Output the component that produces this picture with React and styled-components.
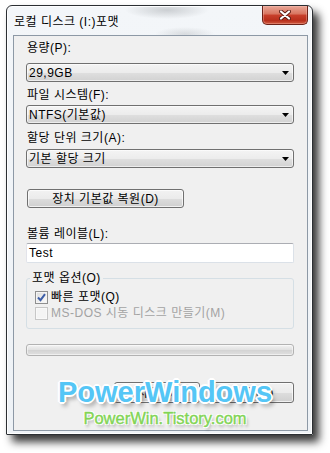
import styled, { createGlobalStyle } from "styled-components";

const GlobalStyle = createGlobalStyle`
  html, body {
    margin: 0;
    padding: 0;
    background: #fff;
  }
  body {
    font-family: "Liberation Sans", "Noto Sans CJK KR", sans-serif;
  }
`;

const uiFont = `"Liberation Sans", "Noto Sans CJK KR", sans-serif`;

const Page = styled.div`
  position: relative;
  width: 330px;
  height: 453px;
  padding: 5px 0 0 6px;
  box-sizing: border-box;
  overflow: hidden;
  background: #fff;
`;

const Window = styled.div`
  box-sizing: border-box;
  width: 307px;
  height: 430px;
  border: 1px solid #2b2f33;
  border-radius: 6px 6px 1px 1px;
  background:
    radial-gradient(ellipse 42px 9px at 160px 4px, rgba(110, 115, 120, 0.3), transparent),
    radial-gradient(ellipse 30px 7px at 178px 28px, rgba(120, 125, 130, 0.22), transparent),
    linear-gradient(#f3f6f9, #eef2f6);
  box-shadow: 6px 7px 8px rgba(0, 0, 0, 0.78), inset 0 0 0 1px rgba(255, 255, 255, 0.9);
  padding: 0 4px 3px 6px;
  display: flex;
  flex-direction: column;
`;

const TitleBar = styled.div`
  height: 29px;
  display: flex;
  align-items: flex-start;
  justify-content: space-between;
`;

const Title = styled.div`
  margin: 9px 0 0 1px;
  font: 12px/14px ${uiFont};
  letter-spacing: 0.5px;
  color: #000;
`;

const CloseButton = styled.div`
  box-sizing: border-box;
  width: 46px;
  height: 19px;
  border: 1px solid #6c2218;
  border-top: none;
  border-radius: 0 0 5px 5px;
  background: linear-gradient(#e9a797 0%, #d8745f 45%, #c8402c 50%, #b82f1c 80%, #cf5a3f 100%);
  box-shadow: inset 0 0 0 1px rgba(255, 200, 190, 0.35);
  display: flex;
  align-items: center;
  justify-content: center;
`;

const Client = styled.div`
  flex: 1;
  border: 1px solid #8d99a6;
  background: #f0f0f0;
  padding: 0 13px 0 12px;
  display: flex;
  flex-direction: column;
`;

const Label = styled.div`
  margin-top: ${p => p.$top}px;
  padding-left: 1px;
  font: 12px/14px ${uiFont};
  letter-spacing: 0.5px;
  color: #000;
  white-space: nowrap;
`;

const Combo = styled.div`
  box-sizing: border-box;
  height: 19px;
  margin-top: ${p => p.$top}px;
  border: 1px solid #707070;
  border-radius: 3px;
  background: linear-gradient(#f4f4f4 0%, #ececec 50%, #dfdfdf 51%, #d2d2d2 100%);
  box-shadow: inset 0 0 0 1px rgba(255, 255, 255, 0.6);
  display: flex;
  align-items: center;
  justify-content: space-between;
  padding: 0 4px 0 2px;
  font: 12px/14px ${uiFont};
  letter-spacing: 0.5px;
  color: #000;
`;

const Button = styled.div`
  box-sizing: border-box;
  width: ${p => p.$w}px;
  height: ${p => p.$h}px;
  margin-top: ${p => p.$top || 0}px;
  margin-left: ${p => p.$left || 0}px;
  border: 1px solid #707070;
  border-radius: 3px;
  background: linear-gradient(#f2f2f2 0%, #ebebeb 50%, #dddddd 51%, #cfcfcf 100%);
  box-shadow: inset 0 0 0 1px rgba(255, 255, 255, 0.7);
  display: flex;
  align-items: center;
  justify-content: center;
  font: 12px/14px ${uiFont};
  letter-spacing: 0.5px;
  color: #000;
  white-space: nowrap;
`;

const TextBox = styled.div`
  box-sizing: border-box;
  height: 20px;
  margin-top: 2px;
  background: #fff;
  border: 1px solid #dbe1e8;
  border-top-color: #abadb3;
  border-left-color: #e2e3ea;
  border-radius: 2px;
  display: flex;
  align-items: center;
  padding-left: 2px;
  font: 12px/14px ${uiFont};
  letter-spacing: 0.5px;
  color: #000;
`;

const Group = styled.fieldset`
  margin: 8px 0 0 0;
  padding: 0;
  min-width: 0;
  border: 1px solid #d5dfe5;
  border-radius: 3px;
`;

const Legend = styled.legend`
  margin-left: 3px;
  padding: 0 2px;
  font: 12px/14px ${uiFont};
  letter-spacing: 0.5px;
  color: #000;
`;

const OptionList = styled.div`
  padding: 4px 0 7px 8px;
  display: flex;
  flex-direction: column;
`;

const OptionRow = styled.div`
  height: 16px;
  display: flex;
  align-items: center;
  gap: 3px;
  font: 12px/14px ${uiFont};
  letter-spacing: 0.5px;
  color: ${p => (p.$disabled ? "#a3a3a3" : "#000")};
  white-space: nowrap;
`;

const Box = styled.span`
  box-sizing: border-box;
  width: 13px;
  height: 13px;
  border: 1px solid ${p => (p.$disabled ? "#c7c7c7" : "#8f8f8f")};
  background: ${p =>
    p.$disabled
      ? "#f4f4f4"
      : "linear-gradient(135deg, #dcdcdc, #fdfdfd)"};
  box-shadow: inset 0 0 0 1px ${p => (p.$disabled ? "#f9f9f9" : "#f4f4f4")};
  display: flex;
  align-items: center;
  justify-content: center;
`;

const Progress = styled.div`
  box-sizing: border-box;
  height: 12px;
  margin-top: 15px;
  border: 1px solid #b2b2b2;
  border-radius: 3px;
  background: linear-gradient(#f3f3f3 0%, #e2e2e2 45%, #d4d4d4 55%, #e0e0e0 100%);
  box-shadow: inset 0 0 0 1px rgba(255, 255, 255, 0.5);
`;

const Actions = styled.div`
  margin-top: 26px;
  display: flex;
  justify-content: flex-end;
  gap: 13px;
`;

const Watermark = styled.div`
  position: absolute;
  top: 378px;
  left: 0;
  right: 0;
  display: flex;
  flex-direction: column;
  align-items: center;
  pointer-events: none;
`;

const BrandBig = styled.div`
  font: bold 29px/29px "Liberation Sans", Arial, sans-serif;
  color: #55c6f6;
  text-shadow:
    -1px -1px 0 #fff, 1px -1px 0 #fff, -1px 1px 0 #fff, 1px 1px 0 #fff,
    0 -2px 0 #fff, 0 2px 0 #fff, -2px 0 0 #fff, 2px 0 0 #fff,
    3px 4px 4px rgba(0, 0, 0, 0.35);
`;

const BrandSmall = styled.div`
  margin-top: 3px;
  font: 16.5px/17px "Liberation Sans", Arial, sans-serif;
  color: #82d455;
  -webkit-text-stroke: 0.4px #82d455;
  text-shadow:
    -1px -1px 0 #fff, 1px -1px 0 #fff, -1px 1px 0 #fff, 1px 1px 0 #fff,
    2px 3px 3px rgba(0, 0, 0, 0.3);
`;

function Arrow() {
  return (
    <svg width="7" height="4" viewBox="0 0 7 4">
      <polygon points="0,0 7,0 3.5,4" fill="#000" />
    </svg>
  );
}

function CloseGlyph() {
  return (
    <svg width="12" height="10" viewBox="0 0 12 10">
      <path d="M2 1.5 L10 8.5 M10 1.5 L2 8.5" stroke="#5a1a12" strokeWidth="4" strokeLinecap="round" />
      <path d="M2 1.5 L10 8.5 M10 1.5 L2 8.5" stroke="#fff" strokeWidth="2.2" strokeLinecap="round" />
    </svg>
  );
}

function Check() {
  return (
    <svg width="9" height="9" viewBox="0 0 9 9">
      <path d="M1 4.5 L3.5 7.2 L8 1.2" stroke="#3d5ea8" strokeWidth="2" fill="none" />
    </svg>
  );
}

const fields = [
  { label: "용량(P):", value: "29,9GB", labelTop: 5, comboTop: 8 },
  { label: "파일 시스템(F):", value: "NTFS(기본값)", labelTop: 6, comboTop: 3 },
  { label: "할당 단위 크기(A):", value: "기본 할당 크기", labelTop: 7, comboTop: 4 },
];

export default function App() {
  return (
    <Page>
      <GlobalStyle />
      <Window>
        <TitleBar>
          <Title>로컬 디스크 (I:)포맷</Title>
          <CloseButton>
            <CloseGlyph />
          </CloseButton>
        </TitleBar>
        <Client>
          {fields.map(f => (
            <div key={f.label}>
              <Label $top={f.labelTop}>{f.label}</Label>
              <Combo $top={f.comboTop}>
                <span>{f.value}</span>
                <Arrow />
              </Combo>
            </div>
          ))}
          <Button $w={157} $h={19} $top={21} $left={1}>
            장치 기본값 복원(D)
          </Button>
          <Label $top={19}>볼륨 레이블(L):</Label>
          <TextBox>Test</TextBox>
          <Group>
            <Legend>포맷 옵션(O)</Legend>
            <OptionList>
              <OptionRow>
                <Box>
                  <Check />
                </Box>
                빠른 포맷(Q)
              </OptionRow>
              <OptionRow $disabled>
                <Box $disabled />
                MS-DOS 시동 디스크 만들기(M)
              </OptionRow>
            </OptionList>
          </Group>
          <Progress />
          <Actions>
            <Button $w={86} $h={21}>시작(S)</Button>
            <Button $w={81} $h={21}>닫기(C)</Button>
          </Actions>
        </Client>
      </Window>
      <Watermark>
        <BrandBig>PowerWindows</BrandBig>
        <BrandSmall>PowerWin.Tistory.com</BrandSmall>
      </Watermark>
    </Page>
  );
}
